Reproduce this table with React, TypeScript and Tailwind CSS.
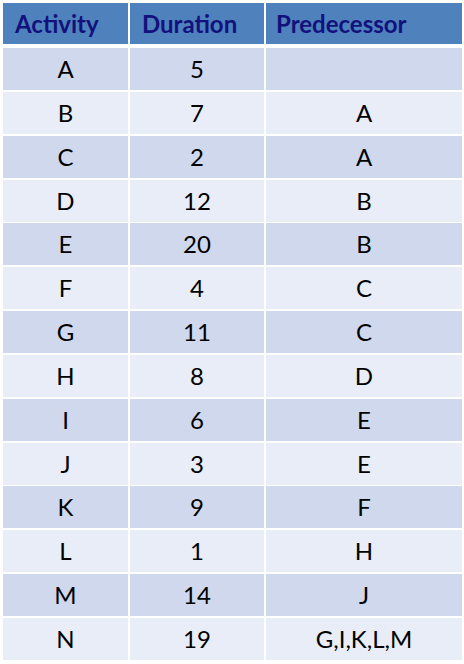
import React from "react";

const rows: [string, string, string][] = [
  ["A", "5", ""],
  ["B", "7", "A"],
  ["C", "2", "A"],
  ["D", "12", "B"],
  ["E", "20", "B"],
  ["F", "4", "C"],
  ["G", "11", "C"],
  ["H", "8", "D"],
  ["I", "6", "E"],
  ["J", "3", "E"],
  ["K", "9", "F"],
  ["L", "1", "H"],
  ["M", "14", "J"],
  ["N", "19", "G,I,K,L,M"],
];

export default function App() {
  return (
    <div
      className="w-[464px] h-[664px] bg-white pt-[3px] pl-[3px]"
      style={{ fontFamily: "Lato, 'Open Sans', sans-serif" }}
    >
      <div className="grid grid-cols-[125px_134px_196px] gap-x-[2px] h-[41px] text-[24px] font-bold text-[#12127c]">
        <div className="bg-[#4f81bd] flex items-center pl-[12px]">Activity</div>
        <div className="bg-[#4f81bd] flex items-center pl-[12px]">Duration</div>
        <div className="bg-[#4f81bd] flex items-center pl-[10px]">Predecessor</div>
      </div>
      <div className="mt-[4px] flex flex-col gap-y-[1.85px]">
        {rows.map((r, i) => (
          <div
            key={i}
            className={
              "grid grid-cols-[125px_134px_196px] gap-x-[2px] h-[42px] text-[24px] text-black " +
              (i % 2 === 0 ? "[&>div]:bg-[#d0d8ee]" : "[&>div]:bg-[#e9edf7]")
            }
          >
            <div className="flex items-center justify-center">{r[0]}</div>
            <div className="flex items-center justify-center">{r[1]}</div>
            <div className="flex items-center justify-center">{r[2]}</div>
          </div>
        ))}
      </div>
    </div>
  );
}
